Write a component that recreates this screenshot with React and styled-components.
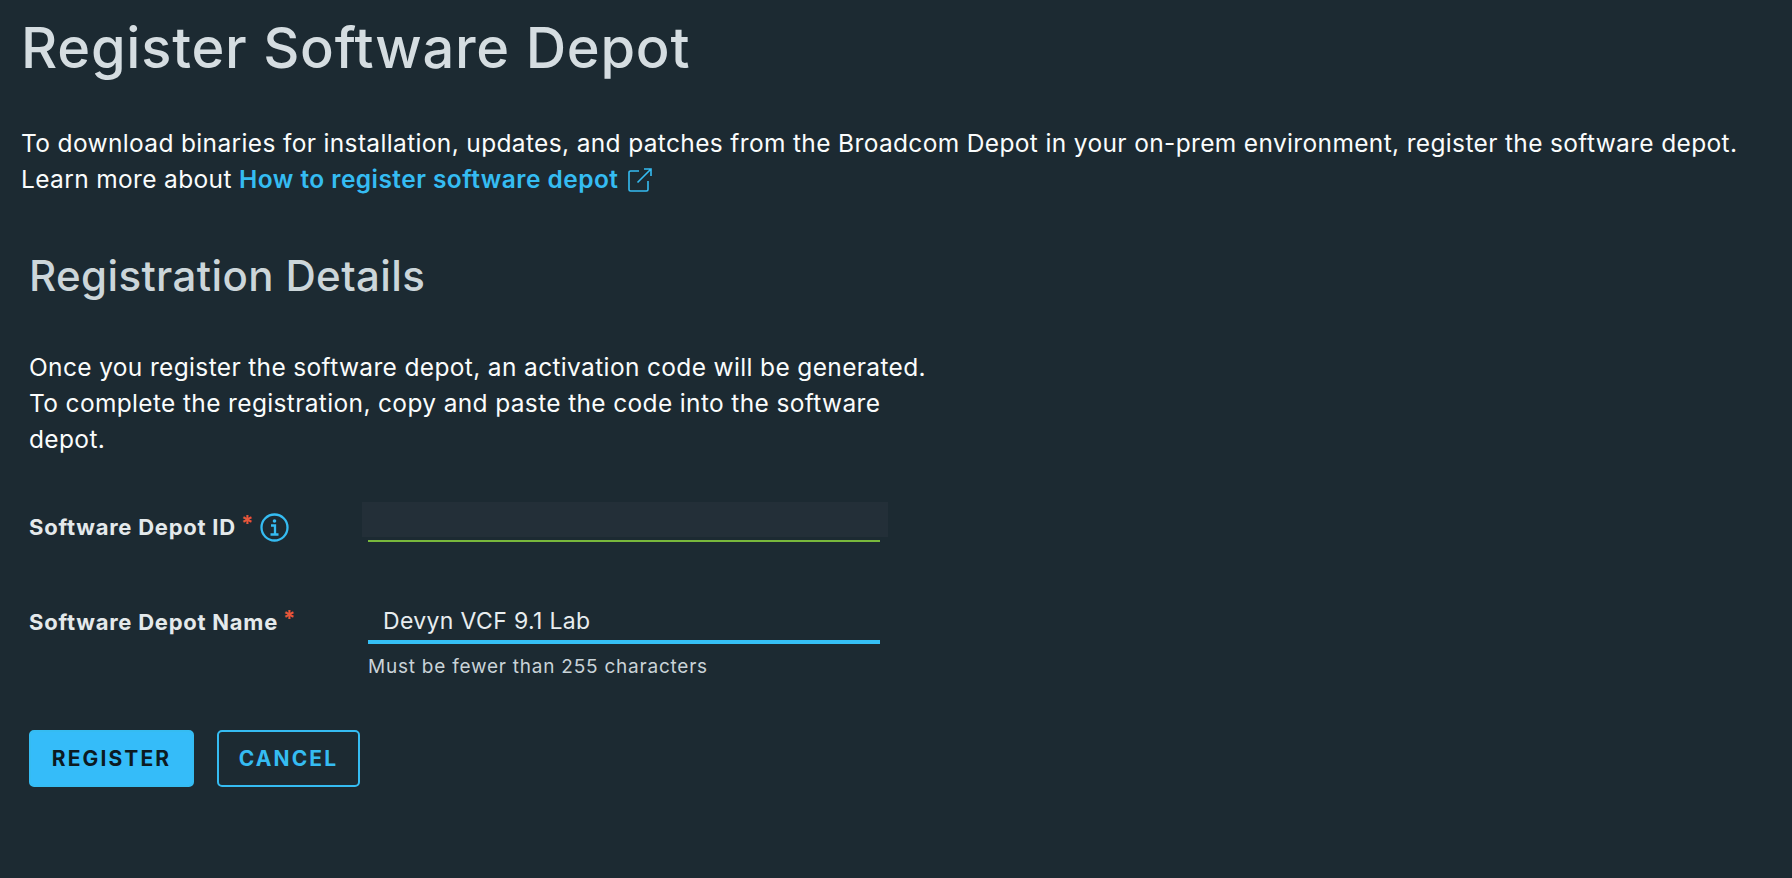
import React from "react";
import styled, { createGlobalStyle } from "styled-components";

const Global = createGlobalStyle`
  html, body { margin: 0; padding: 0; height: 100%; background: #1c2a32; }
  body { font-family: Inter, "Noto Sans", "Liberation Sans", sans-serif; overflow: hidden; }
  #root { height: 100%; }
`;
const Page = styled.main`
  box-sizing: border-box;
  height: 878px;
  padding: 13px 0 0 21px;
  background: #1c2a32;
  color: #ffffff;
`;
const Title = styled.h1`
  margin: 0;
  font-size: 56px;
  line-height: 70px;
  font-weight: 500;
  letter-spacing: 0.75px;
  color: #d5dde1;
`;
const Intro = styled.p`
  margin: 42px 0 0;
  font-size: 24.5px;
  line-height: 36px;
  font-weight: 400;
  letter-spacing: 0.35px;
  color: #fafcfc;
  white-space: nowrap;
`;
const Link = styled.a`
  color: #35bcf2;
  font-weight: 600;
  letter-spacing: 0.45px;
  text-decoration: none;
`;
const ExternalIcon = styled.svg`
  width: 26px;
  height: 26px;
  margin-left: 9px;
  vertical-align: -5px;
`;
const Details = styled.section`
  margin: 54px 0 0 8px;
`;
const Heading = styled.h2`
  margin: 0;
  font-size: 42px;
  line-height: 50px;
  font-weight: 500;
  letter-spacing: 0.38px;
  color: #ccd6da;
`;
const Lead = styled.p`
  margin: 48px 0 0;
  width: 915px;
  font-size: 24.5px;
  line-height: 36px;
  letter-spacing: 0.35px;
  color: #fafcfc;
`;
const Row = styled.div`
  display: flex;
  align-items: flex-start;
  margin-top: ${p => p.$top}px;
`;
const Label = styled.label`
  flex: 0 0 339px;
  display: flex;
  align-items: center;
  font-size: 22px;
  line-height: 30px;
  font-weight: 700;
  letter-spacing: 0.75px;
  color: #e4e9eb;
  padding-top: ${p => p.$pad}px;
`;
const Star = styled.span`
  color: #e8563a;
  line-height: 14px;
  margin: 0 0 8px 5px;
`;
const InfoIcon = styled.svg`
  width: 29px;
  height: 29px;
  margin-left: 6px;
`;
const Field = styled.div`
  width: 512px;
`;
const Shade = styled.div`
  margin: 0 -8px 0 -6px;
  height: 35px;
  background: #232f38;
`;
const Input = styled.input`
  display: block;
  box-sizing: border-box;
  width: 100%;
  height: 44px;
  padding: 1px 15px 0;
  border: 0;
  border-bottom: ${p => p.$line};
  background: transparent;
  outline: none;
  font: 400 23px Inter, sans-serif;
  letter-spacing: 0.35px;
  color: #e8edef;
`;
const IdLine = styled.div`
  height: 2px;
  margin-top: 3px;
  background: #78b83c;
`;
const Help = styled.div`
  margin-top: 10px;
  font-size: 19px;
  line-height: 26px;
  letter-spacing: 0.77px;
  color: #c9d3d8;
`;
const Actions = styled.div`
  display: flex;
  gap: 23px;
  margin-top: 50px;
`;
const Button = styled.button`
  box-sizing: border-box;
  width: ${p => p.$w}px;
  height: 57px;
  border-radius: 5px;
  border: 2px solid #35bcf2;
  background: ${p => (p.$primary ? "#35bcf9" : "transparent")};
  color: ${p => (p.$primary ? "#0c1a22" : "#35bcf2")};
  font: 700 21px Inter, sans-serif;
  letter-spacing: 2.1px;
`;

export default function App() {
  return (
    <Page>
      <Global />
      <Title>Register Software Depot</Title>
      <Intro>
        To download binaries for installation, updates, and patches from the Broadcom Depot in your on-prem environment, register the software depot.
        <br />
        Learn more about <Link href="#">How to register software depot</Link>
        <ExternalIcon viewBox="0 0 26 26" fill="none" stroke="#35bcf2" strokeWidth="1.6">
          <path d="M12 4H3.5a1.5 1.5 0 0 0-1.5 1.5v17A1.5 1.5 0 0 0 3.5 24h16a1.5 1.5 0 0 0 1.5-1.5V14" />
          <path d="M10.5 15.5 24 2M17 2h7v7" />
        </ExternalIcon>
      </Intro>
      <Details>
        <Heading>Registration Details</Heading>
        <Lead>
          Once you register the software depot, an activation code will be generated. To complete the registration, copy and paste the code into the software depot.
        </Lead>
        <Row $top={45}>
          <Label $pad={10}>
            Software Depot ID<Star>*</Star>
            <InfoIcon viewBox="0 0 29 29" fill="none" stroke="#35bcf2" strokeWidth="2.3">
              <circle cx="14.5" cy="14.5" r="13" />
              <path d="M11 12.5h4V21M10.5 21.5h8" />
              <circle cx="14.5" cy="8" r="1.8" fill="#35bcf2" stroke="none" />
            </InfoIcon>
          </Label>
          <Field>
            <Shade />
            <IdLine />
          </Field>
        </Row>
        <Row $top={58}>
          <Label $pad={7}>
            Software Depot Name<Star>*</Star>
          </Label>
          <Field>
            <Input $line="4px solid #35c0f5" defaultValue="Devyn VCF 9.1 Lab" />
            <Help>Must be fewer than 255 characters</Help>
          </Field>
        </Row>
        <Actions>
          <Button $primary $w={165}>REGISTER</Button>
          <Button $w={143}>CANCEL</Button>
        </Actions>
      </Details>
    </Page>
  );
}
